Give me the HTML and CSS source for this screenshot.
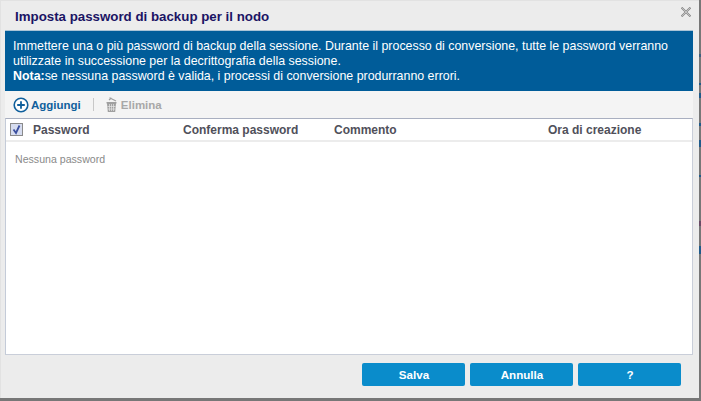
FILE: index.html
```html
<!DOCTYPE html>
<html lang="it">
  <head>
    <meta charset="UTF-8" />
    <title>Imposta password di backup per il nodo</title>
    <link rel="stylesheet" href="styles.css">
  </head>
  <body>
    <div class="dialog">
      <div class="dialog-header">
        <span class="dialog-title">Imposta password di backup per il nodo</span>
        <svg class="close-icon" width="10" height="10" viewBox="0 0 10 10">
          <path d="M0.5 0.5 L9.5 9.5 M9.5 0.5 L0.5 9.5" stroke="#8a8a8a" stroke-width="2" fill="none" />
          <path d="M0.5 0.5 L9.5 9.5 M9.5 0.5 L0.5 9.5" stroke="#e4e4e4" stroke-width="0.6" fill="none" />
        </svg>
      </div>

      <div class="notice">
        <p>Immettere una o più password di backup della sessione. Durante il processo di conversione, tutte le password verranno</p>
        <p>utilizzate in successione per la decrittografia della sessione.</p>
        <p><strong>Nota:</strong>se nessuna password è valida, i processi di conversione produrranno errori.</p>
      </div>

      <div class="toolbar">
        <button class="tool-btn add-btn">
          <svg width="16" height="16" viewBox="0 0 16 16">
            <circle cx="8" cy="8" r="6.8" fill="#fff" stroke="#0f5f9c" stroke-width="1.6" />
            <path d="M8 4.2 V11.8 M4.2 8 H11.8" stroke="#0f5f9c" stroke-width="1.8" fill="none" />
          </svg>
          Aggiungi
        </button>
        <span class="tool-sep"></span>
        <button class="tool-btn del-btn">
          <svg width="11" height="16" viewBox="0 0 11 16">
            <path d="M3 3 L5.5 1 M3.5 0.8 L10 4" stroke="#a0a0a0" stroke-width="1.2" fill="none" />
            <path d="M0.5 5 H10.5 V6.5 H10 L9.2 15 H1.8 L1 6.5 H0.5 Z" fill="#a0a0a0" />
            <path d="M3.5 7 V14 M5.5 7 V14 M7.5 7 V14 M1.5 9.5 H9.5 M1.5 12 H9.5" stroke="#e6e6e6" stroke-width="0.7" fill="none" />
          </svg>
          Elimina
        </button>
      </div>

      <div class="grid">
        <div class="grid-head">
          <div class="col-check"><span class="checkbox">
            <svg width="11" height="11" viewBox="0 0 11 11">
              <path d="M2.5 5.5 L5 9 L8.5 1.5" stroke="#3b4f9e" stroke-width="1.8" fill="none" />
            </svg>
          </span></div>
          <div class="col-pass">Password</div>
          <div class="col-confirm">Conferma password</div>
          <div class="col-comment">Commento</div>
          <div class="col-date">Ora di creazione</div>
        </div>
        <div class="grid-empty">Nessuna password</div>
      </div>

      <div class="dialog-footer">
        <button class="action-btn">Salva</button>
        <button class="action-btn">Annulla</button>
        <button class="action-btn">?</button>
      </div>
    </div>
  </body>
</html>
```

FILE: styles.css
```css
html,
body {
  margin: 0;
  height: 401px;
  overflow: hidden;
}
/* page behind the dialog: only a thin strip shows on the right */
body {
  font-family: "Liberation Sans", Arial, sans-serif;
  background: linear-gradient(
    to bottom,
    #777 0 54px,
    #3d5f80 54px 57px,
    #777 57px 83px,
    #1f5a8a 83px 85px,
    #777 85px 93px,
    #1f5a8a 93px 98px,
    #777 98px 123px,
    #1f5a8a 123px 126px,
    #777 126px 140px,
    #1f5a8a 140px 147px,
    #777 147px 175px,
    #1f5a8a 175px 177px,
    #777 177px 221px,
    #6a4a66 221px 226px,
    #777 226px 246px,
    #1f5a8a 246px 254px,
    #777 254px
  );
}
p {
  margin: 0;
}
.dialog {
  width: 699px;
  height: 398px;
  background: #ececec;
  display: flex;
  flex-direction: column;
  box-shadow: inset 1px 1px 0 #e2e2e2;
}
.dialog-header {
  height: 30px;
  flex: none;
  display: flex;
  align-items: center;
  justify-content: space-between;
  padding: 3px 8px 0 15px;
  box-sizing: border-box;
}
.dialog-title {
  font-size: 13.3px;
  font-weight: bold;
  color: #1b1464;
}
.close-icon {
  margin-bottom: 10px;
}
.notice {
  height: 61px;
  flex: none;
  box-sizing: border-box;
  width: 688px;
  margin-left: 5px;
  padding: 8px 8px 0;
  background: #005c99;
  border-top: 1px solid #a9c3d6;
  color: #fff;
  font-size: 12.4px;
  line-height: 15px;
}
.toolbar {
  height: 27px;
  flex: none;
  display: flex;
  align-items: center;
  width: 680px;
  margin-left: 5px;
  padding-left: 8px;
  background: #f4f4f4;
}
.tool-btn {
  display: flex;
  align-items: center;
  gap: 2px;
  padding: 0;
  border: none;
  background: none;
  font-family: inherit;
  font-size: 11.5px;
  font-weight: bold;
}
.add-btn {
  color: #0f5f9c;
}
.del-btn {
  color: #a8a8a8;
  gap: 4px;
}
.tool-sep {
  width: 1px;
  height: 13px;
  background: #c8c8c8;
  margin: 0 12px;
}
.grid {
  flex: 1;
  margin: 0 5px 0 5px;
  width: 688px;
  box-sizing: border-box;
  background: #fff;
  border: 1px solid #c9ced9;
  border-top-color: #a9afc0;
  border-left-color: #c4cbd8;
}
.grid-head {
  height: 23px;
  display: flex;
  align-items: center;
  box-sizing: border-box;
  border-bottom: 2px solid #ececec;
  font-size: 12px;
  font-weight: bold;
  color: #50505a;
}
.col-check {
  width: 27px;
  padding-left: 4px;
  box-sizing: border-box;
}
.checkbox {
  display: flex;
  width: 11px;
  height: 11px;
  border: 1px solid #8a8a8a;
  background: #d6dcef;
}
.col-pass {
  width: 150px;
}
.col-confirm {
  width: 151px;
}
.col-comment {
  width: 214px;
}
.grid-empty {
  padding: 11px 9px;
  font-size: 10.6px;
  line-height: 13px;
  color: #8a8a8a;
}
.dialog-footer {
  height: 43px;
  flex: none;
  display: flex;
  justify-content: flex-end;
  gap: 5px;
  padding: 8px 18px 0 0;
  box-sizing: border-box;
}
.action-btn {
  width: 103px;
  height: 23px;
  padding: 0 0 0 1px;
  border: none;
  border-radius: 2px;
  background: #0a8ccb;
  color: #fff;
  font-family: inherit;
  font-size: 11.6px;
  font-weight: bold;
}
```
